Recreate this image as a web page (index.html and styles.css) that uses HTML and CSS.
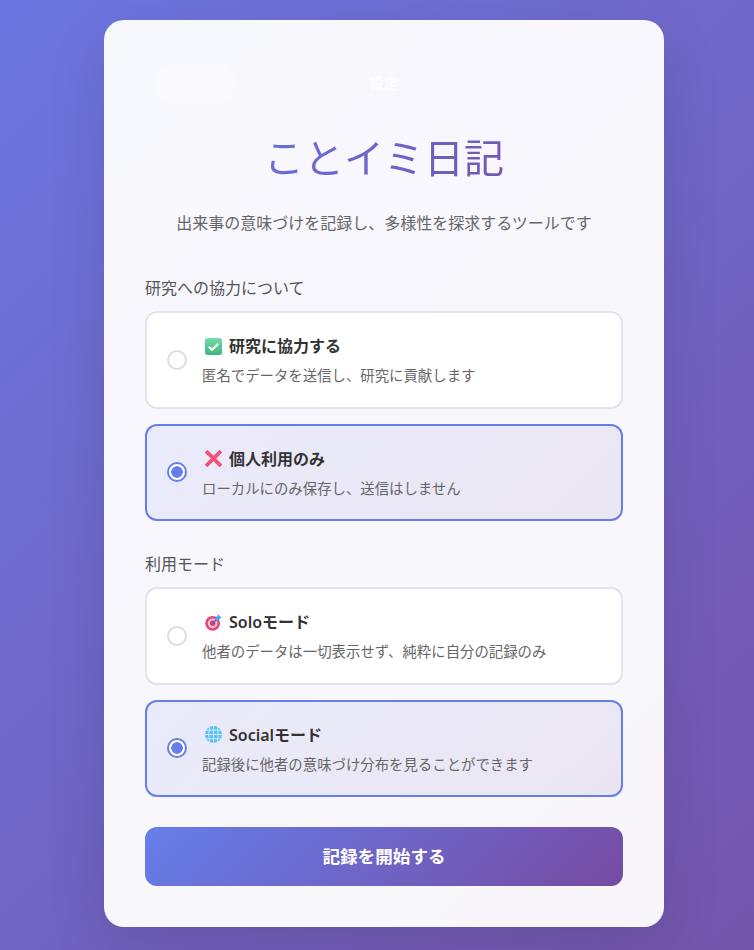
FILE: index.html
```html
<!DOCTYPE html>
<html lang="ja">
<head>
  <meta charset="UTF-8" />
  <meta name="viewport" content="width=device-width, initial-scale=1.0" />
  <title>ことイミ日記</title>
  <link rel="stylesheet" href="styles.css">
</head>
<body>

  <div class="container">
    <button class="back-btn" type="button" aria-label="戻る"></button>
    <span class="settings-link">設定</span>

    <h1>ことイミ日記</h1>
    <p class="subtitle">出来事の意味づけを記録し、多様性を探求するツールです</p>

    <div class="section">
      <div class="section-label">研究への協力について</div>
      <div class="options">
        <label class="option">
          <span class="radio"></span>
          <span class="option-body">
            <span class="option-title">
              <svg class="emoji" viewBox="0 0 16 16"><defs><linearGradient id="checkFill" x1="0" y1="0" x2="0" y2="1"><stop offset="0" stop-color="#74dca9"/><stop offset="1" stop-color="#3fb57c"/></linearGradient></defs><rect x="0" y="0" width="16" height="16" rx="2.5" fill="url(#checkFill)"/><path d="M3.6 8.2l3 2.9 5.8-5.6" fill="none" stroke="#fff" stroke-width="2"/></svg>
              研究に協力する
            </span>
            <span class="option-desc">匿名でデータを送信し、研究に貢献します</span>
          </span>
        </label>
        <label class="option selected">
          <span class="radio"></span>
          <span class="option-body">
            <span class="option-title">
              <svg class="emoji" viewBox="0 0 16 16"><path d="M1 1l14 14M15 1L1 15" fill="none" stroke="#f4517c" stroke-width="3.6"/></svg>
              個人利用のみ
            </span>
            <span class="option-desc">ローカルにのみ保存し、送信はしません</span>
          </span>
        </label>
      </div>
    </div>

    <div class="section">
      <div class="section-label">利用モード</div>
      <div class="options">
        <label class="option">
          <span class="radio"></span>
          <span class="option-body">
            <span class="option-title">
              <svg class="emoji" viewBox="0 0 16 16"><circle cx="7.2" cy="8.8" r="7" fill="#e2467c"/><circle cx="7.2" cy="8.8" r="4.6" fill="#f4c4d6"/><circle cx="7.2" cy="8.8" r="2.6" fill="#d93e74"/><path d="M7.4 8.6L12 4" stroke="#3c6f9a" stroke-width="1.2"/><path d="M9.5 4L13 .3l.8 1.9 2 .6-3.4 3.4-2.2-.4z" fill="#42a5f0"/></svg>
              Soloモード
            </span>
            <span class="option-desc">他者のデータは一切表示せず、純粋に自分の記録のみ</span>
          </span>
        </label>
        <label class="option selected">
          <span class="radio"></span>
          <span class="option-body">
            <span class="option-title">
              <svg class="emoji" viewBox="0 0 16 16"><circle cx="8" cy="8" r="8" fill="#5cc0f5"/><path d="M8 0v16M0 8h16M1.4 4h13.2M1.4 12h13.2M4.4 1Q2.6 8 4.4 15M11.6 1q1.8 7 0 14" fill="none" stroke="#cfeefc" stroke-width=".9"/></svg>
              Socialモード
            </span>
            <span class="option-desc">記録後に他者の意味づけ分布を見ることができます</span>
          </span>
        </label>
      </div>
    </div>

    <button class="start-btn" type="button">記録を開始する</button>
  </div>

</body>
</html>
```

FILE: styles.css
```css
* {
  box-sizing: border-box;
}

html, body {
  margin: 0;
  padding: 0;
}

body {
  font-family: "Noto Sans", "Noto Sans CJK JP", sans-serif;
  background: linear-gradient(135deg, #6c76e0 0%, #7455ac 100%);
  height: 950px;
  padding: 20px 0 0 104px;
  color: #333;
  overflow: hidden;
}

.container {
  position: relative;
  width: 560px;
  padding: 109px 41px 41px;
  background: rgba(255, 255, 255, 0.95);
  border-radius: 20px;
  box-shadow: 0 20px 60px rgba(0, 0, 0, 0.12);
}

.back-btn {
  position: absolute;
  top: 42px;
  left: 51px;
  width: 80px;
  height: 43px;
  border: none;
  border-radius: 20px;
  background: rgba(255, 255, 255, 0.35);
}

.settings-link {
  position: absolute;
  top: 53px;
  left: 0;
  width: 100%;
  text-align: center;
  color: #fff;
  font-size: 14.4px;
  font-weight: 500;
  line-height: 22px;
}

h1 {
  margin: 0;
  text-align: center;
  font-size: 40px;
  font-weight: 400;
  line-height: 58px;
  background: linear-gradient(135deg, #667eea, #764ba2);
  -webkit-background-clip: text;
  background-clip: text;
  color: transparent;
}

.subtitle {
  margin: 24px 0 0;
  text-align: center;
  font-size: 16px;
  line-height: 24px;
  color: #666;
}

.section {
  margin-top: 41px;
}

.section + .section {
  margin-top: 31px;
}

.section-label {
  font-size: 16px;
  line-height: 24px;
  color: #555;
  margin-bottom: 11px;
}

.options {
  display: flex;
  flex-direction: column;
  gap: 15px;
}

.option {
  display: flex;
  align-items: center;
  gap: 15px;
  height: 98px;
  padding: 0 20px;
  background: #fff;
  border: 2px solid #e1e4ea;
  border-radius: 12px;
  cursor: pointer;
}

.option.selected {
  height: 97px;
  border-color: #667eea;
  background: linear-gradient(135deg, rgba(102, 126, 234, 0.1), rgba(118, 75, 162, 0.1));
}

.radio {
  flex: none;
  width: 20px;
  height: 20px;
  border: 2px solid #ddd;
  border-radius: 50%;
  background: #fff;
}

.selected .radio {
  margin-bottom: 1px;
  border-color: #667eea;
  background: radial-gradient(circle, #667eea 0 5.5px, #fff 6px);
}

.option-body {
  display: flex;
  flex-direction: column;
  gap: 7px;
}

.option-title {
  display: flex;
  align-items: center;
  gap: 7px;
  font-size: 16px;
  font-weight: 600;
  line-height: 24px;
  color: #333;
}

.emoji {
  flex: none;
  width: 17px;
  height: 17px;
  margin-left: 3px;
}

.option-desc {
  font-size: 14.4px;
  line-height: 21px;
  color: #666;
}

.start-btn {
  display: block;
  width: 100%;
  height: 59px;
  margin-top: 30px;
  padding: 0 0 3px;
  border: none;
  border-radius: 12px;
  background: linear-gradient(135deg, #667eea, #764ba2);
  color: #fff;
  font-family: inherit;
  font-size: 17.6px;
  font-weight: 700;
  cursor: pointer;
}
```
